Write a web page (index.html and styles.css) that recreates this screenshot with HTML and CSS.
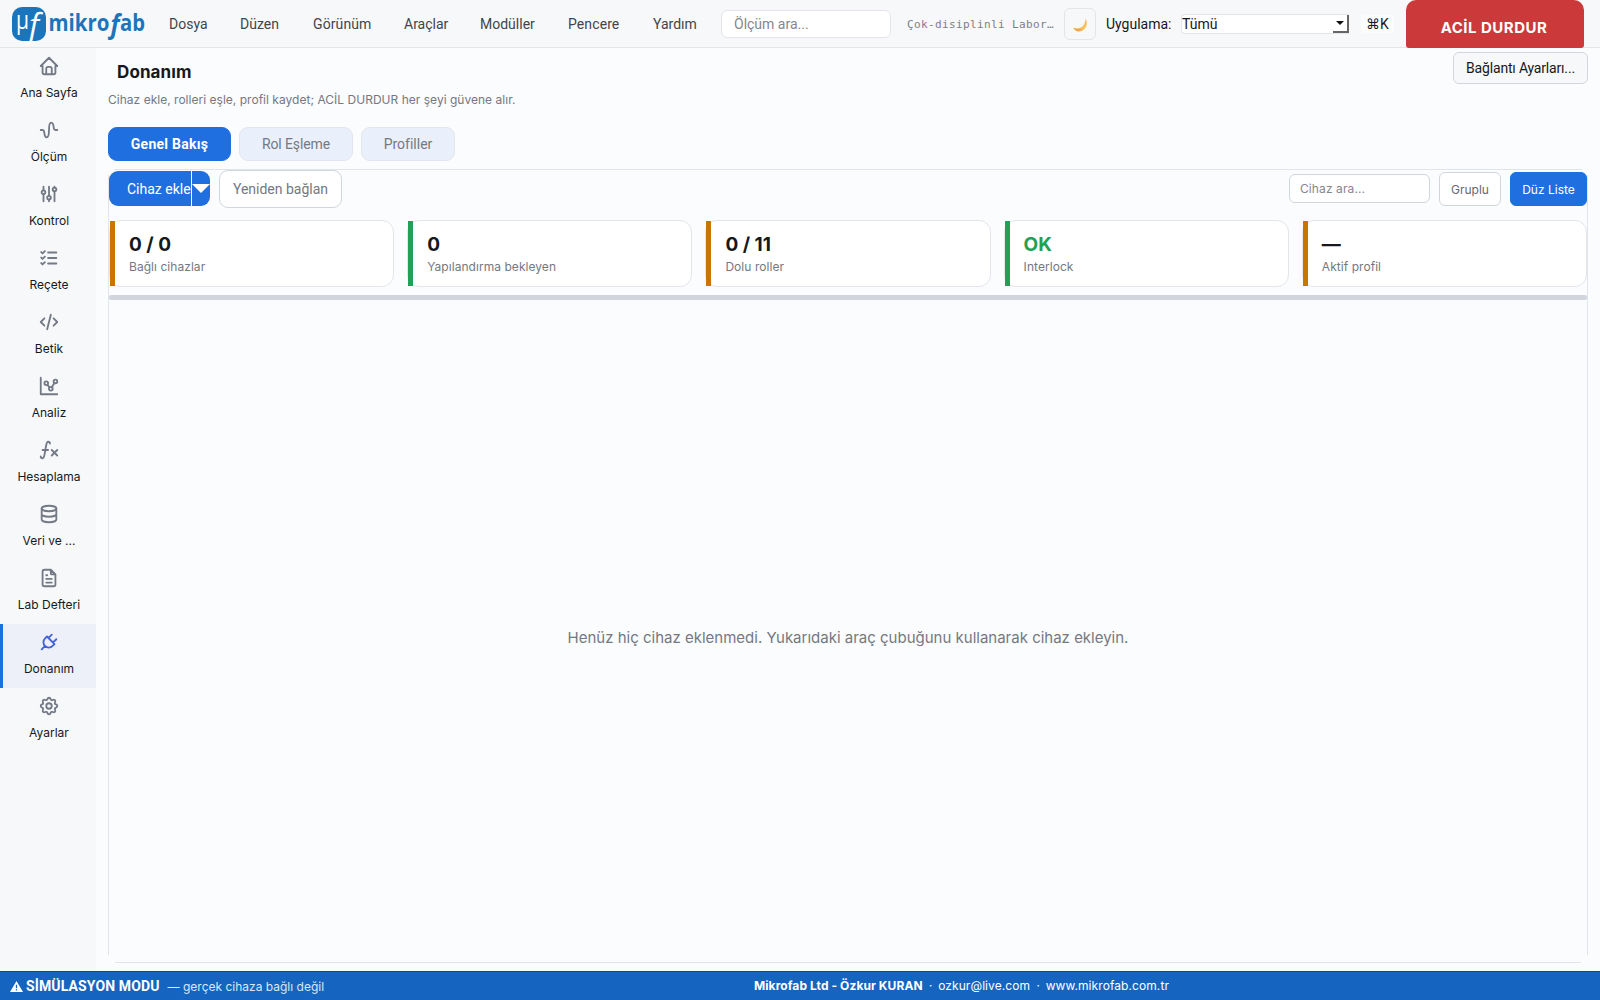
FILE: index.html
```
<!DOCTYPE html>
<html lang="tr">
<head>
    <meta charset="UTF-8">
    <meta name="viewport" content="width=device-width, initial-scale=1.0">
    <title>Mikrofab - Donanım</title>
    <link rel="stylesheet" href="styles.css">
</head>
<body>
    <!-- üst bar -->
    <header class="topbar">
        <div class="logo">
            <svg width="138" height="47" viewBox="0 0 138 47">
                <rect x="0" y="7" width="34" height="34" rx="10" fill="#1b75bc"/>
                <text class="logo-mu" x="4" y="28.500" textLength="13" lengthAdjust="spacingAndGlyphs">µ</text>
                <text class="logo-f" x="17" y="36.500" textLength="10" lengthAdjust="spacingAndGlyphs">f</text>
                <text class="logo-word" x="36.500" y="31" textLength="61" lengthAdjust="spacingAndGlyphs">mikro</text>
                <text class="logo-word italic" x="98.500" y="34" textLength="9" lengthAdjust="spacingAndGlyphs">f</text>
                <text class="logo-word" x="108" y="31" textLength="25" lengthAdjust="spacingAndGlyphs">ab</text>
            </svg>
        </div>
        <nav class="menu">
            <span class="m1">Dosya</span>
            <span class="m2">Düzen</span>
            <span class="m3">Görünüm</span>
            <span class="m4">Araçlar</span>
            <span class="m5">Modüller</span>
            <span class="m6">Pencere</span>
            <span class="m7">Yardım</span>
        </nav>
        <div class="search">Ölçüm ara...</div>
        <div class="subtitle">Çok-disiplinli Labor…</div>
        <div class="theme">
            <svg width="14" height="14" viewBox="0 0 14 14">
                <defs>
                    <linearGradient id="moon" x1="0" y1="1" x2="1" y2="0">
                        <stop offset="0" stop-color="#e58a4e"/>
                        <stop offset=".5" stop-color="#fcc35c"/>
                        <stop offset="1" stop-color="#f2b45c"/>
                    </linearGradient>
                </defs>
                <path d="M12.6 .3C14.6 4.600 14 9 11 11.600C7.500 14.600 2 14 .3 9.800C4 11.300 8 10.500 10.300 7.600C12 5.500 12.500 2.800 12.600 .3z" fill="url(#moon)"/>
            </svg>
        </div>
        <label class="app-label">Uygulama:</label>
        <div class="combo">
            <span>Tümü</span>
            <div class="combo-arrow"><svg width="8" height="4"><path d="M0 0h8l-4 4z" fill="#111"/></svg></div>
        </div>
        <div class="cmdk">⌘K</div>
        <div class="stop">ACİL DURDUR</div>
    </header>

    <div class="middle">
        <!-- sol menü -->
        <aside class="sidebar">
            <div class="item">
                <svg class="icon" viewBox="0 0 24 24"><path d="M5 12H3l9-9 9 9h-2M5 12v7a2 2 0 0 0 2 2h10a2 2 0 0 0 2-2v-7M9 21v-6a2 2 0 0 1 2-2h2a2 2 0 0 1 2 2v6"/></svg>
                <span>Ana Sayfa</span>
            </div>
            <div class="item">
                <svg class="icon" viewBox="0 0 24 24"><path d="M21 12h-2c-.894 0-1.662-.857-1.761-2-.296-3.450-.749-6-2.749-6s-2.500 3.582-2.500 8-.5 8-2.500 8-2.452-2.547-2.749-6c-.1-1.147-.867-2-1.763-2H3"/></svg>
                <span>Ölçüm</span>
            </div>
            <div class="item">
                <svg class="icon" viewBox="0 0 24 24"><circle cx="6" cy="10" r="2"/><circle cx="12" cy="16" r="2"/><circle cx="18" cy="7" r="2"/><path d="M6 4v4M6 12v8M12 4v10M12 18v2M18 4v1M18 9v11"/></svg>
                <span>Kontrol</span>
            </div>
            <div class="item">
                <svg class="icon" viewBox="0 0 24 24"><path d="M3.500 5.500L5 7l2.500-2.500M3.500 11.500L5 13l2.500-2.500M3.500 17.500L5 19l2.500-2.500M11 6h9M11 12h9M11 18h9"/></svg>
                <span>Reçete</span>
            </div>
            <div class="item">
                <svg class="icon" viewBox="0 0 24 24"><path d="M7 8l-4 4 4 4M17 8l4 4-4 4M14 4l-4 16"/></svg>
                <span>Betik</span>
            </div>
            <div class="item">
                <svg class="icon" viewBox="0 0 24 24"><path d="M3 3v18h18M10.160 10.620l2.340 2.880M15.088 13.328l2.837-4.586"/><circle cx="9" cy="9" r="2"/><circle cx="19" cy="7" r="2"/><circle cx="14" cy="15" r="2"/></svg>
                <span>Analiz</span>
            </div>
            <div class="item">
                <svg class="icon" viewBox="0 0 24 24"><path d="M3 19a2 2 0 0 0 2 2c2 0 2-4 3-9s1-9 3-9a2 2 0 0 1 2 2M5 12h6M15 12l6 6M15 18l6-6"/></svg>
                <span>Hesaplama</span>
            </div>
            <div class="item">
                <svg class="icon" viewBox="0 0 24 24"><ellipse cx="12" cy="6" rx="8" ry="3"/><path d="M4 6v6a8 3 0 0 0 16 0V6M4 12v6a8 3 0 0 0 16 0v-6"/></svg>
                <span>Veri ve ...</span>
            </div>
            <div class="item">
                <svg class="icon" viewBox="0 0 24 24"><path d="M14 3v4a1 1 0 0 0 1 1h4M17 21H7a2 2 0 0 1-2-2V5a2 2 0 0 1 2-2h7l5 5v11a2 2 0 0 1-2 2M9 9h1M9 13h6M9 17h6"/></svg>
                <span>Lab Defteri</span>
            </div>
            <div class="item active">
                <svg class="icon" viewBox="0 0 24 24"><path d="M9.785 6L18 14.215l-2.054 2.054a5.810 5.810 0 1 1-8.215-8.215L9.785 6zM4 20l3.500-3.500M15 4l-3.500 3.500M20 9l-3.500 3.500"/></svg>
                <span>Donanım</span>
            </div>
            <div class="item">
                <svg class="icon" viewBox="0 0 24 24"><path d="M10.325 4.317c.426-1.756 2.924-1.756 3.350 0a1.724 1.724 0 0 0 2.573 1.066c1.543-.94 3.310.826 2.370 2.370a1.724 1.724 0 0 0 1.065 2.572c1.756.426 1.756 2.924 0 3.350a1.724 1.724 0 0 0-1.066 2.573c.94 1.543-.826 3.310-2.370 2.370a1.724 1.724 0 0 0-2.572 1.065c-.426 1.756-2.924 1.756-3.350 0a1.724 1.724 0 0 0-2.573-1.066c-1.543.94-3.310-.826-2.370-2.370a1.724 1.724 0 0 0-1.065-2.572c-1.756-.426-1.756-2.924 0-3.350a1.724 1.724 0 0 0 1.066-2.573c-.94-1.543.826-3.310 2.370-2.370 1 .608 2.296.07 2.572-1.065z"/><circle cx="12" cy="12" r="3"/></svg>
                <span>Ayarlar</span>
            </div>
        </aside>

        <main class="content">
            <div class="page-head">
                <div>
                    <h1>Donanım</h1>
                    <p>Cihaz ekle, rolleri eşle, profil kaydet; ACİL DURDUR her şeyi güvene alır.</p>
                </div>
                <div class="btn-settings">Bağlantı Ayarları...</div>
            </div>
            <div class="tabs">
                <div class="tab on">Genel Bakış</div>
                <div class="tab t2">Rol Eşleme</div>
                <div class="tab t3">Profiller</div>
            </div>
            <section class="panel">
                <div class="toolbar">
                    <div class="split">
                        <span class="split-text">Cihaz ekle</span>
                        <span class="split-arrow"><svg width="18" height="9"><path d="M0 0h18l-9 9z" fill="#fff"/></svg></span>
                    </div>
                    <div class="reconnect">Yeniden bağlan</div>
                    <div class="filter">Cihaz ara...</div>
                    <div class="small-btn grouped">Gruplu</div>
                    <div class="small-btn flat">Düz Liste</div>
                </div>
                <div class="cards">
                    <div class="card orange"><b>0 / 0</b><span>Bağlı cihazlar</span></div>
                    <div class="card green"><b>0</b><span>Yapılandırma bekleyen</span></div>
                    <div class="card orange"><b>0 / 11</b><span>Dolu roller</span></div>
                    <div class="card green ok"><b>OK</b><span>Interlock</span></div>
                    <div class="card orange"><b>—</b><span>Aktif profil</span></div>
                </div>
                <div class="splitter"></div>
                <div class="empty">Henüz hiç cihaz eklenmedi. Yukarıdaki araç çubuğunu kullanarak cihaz ekleyin.</div>
            </section>
        </main>
    </div>

    <!-- alt bar -->
    <footer class="statusbar">
        <div class="sim">
            <svg width="13" height="11" viewBox="0 0 13 11"><path d="M6.500 0L13 11H0z" fill="#fff"/><path d="M6.500 3.800v3.400M6.500 8.300v1.300" stroke="#1565c0" stroke-width="1.300"/></svg>
            <b>SİMÜLASYON MODU</b>
            <span>— gerçek cihaza bağlı değil</span>
        </div>
        <div class="company"><b>Mikrofab Ltd - Özkur KURAN</b><i>·</i><span>ozkur@live.com</span><i>·</i><span>www.mikrofab.com.tr</span></div>
    </footer>
</body>
</html>
```
FILE: styles.css
```
*{
    box-sizing: border-box;
}
body{
    margin: 0;
    width: 1600px;
    height: 1000px;
    overflow: hidden;
    display: flex;
    flex-direction: column;
    background: #fbfcfe;
    color: #16181d;
    font-family: Inter, "Liberation Sans", sans-serif;
    font-size: 13px;
    white-space: nowrap;
}
/* üst bar */
.topbar{
    height: 48px;
    flex: none;
    display: flex;
    align-items: center;
    background: #f7f8fa;
    border-bottom: 1px solid #e3e5e9;
    padding-left: 12px;
}
.logo{
    width: 157px;
    height: 47px;
}
.logo-mu{
    font: 25px "Open Sans", sans-serif;
    fill: #fff;
}
.logo-f{
    font: italic 32px "Open Sans", sans-serif;
    fill: #fff;
}
.logo-word{
    font: bold 23px "Open Sans", sans-serif;
    fill: #1b75bc;
}
.logo-word.italic{
    font-size: 26px;
    font-style: italic;
}
.menu{
    display: flex;
    width: 552px;
    font-family: Roboto, sans-serif;
    font-size: 14px;
    color: #41454d;
}
.m1{
    width: 71px;
}
.m2{
    width: 73px;
}
.m3{
    width: 91px;
    letter-spacing: .1px;
}
.m4{
    width: 76px;
}
.m5{
    width: 88px;
}
.m6{
    width: 85px;
    letter-spacing: .1px;
}
.search{
    width: 170px;
    height: 28px;
    line-height: 26px;
    padding-left: 12px;
    background: #fff;
    border: 1px solid #e3e5e9;
    border-radius: 6px;
    color: #84878d;
    font-family: Roboto, sans-serif;
    font-size: 14px;
}
.subtitle{
    width: 157px;
    margin-left: 16px;
    padding-top: 1px;
    font-family: "DejaVu Sans Mono", monospace;
    font-size: 11px;
    letter-spacing: .38px;
    color: #7b7f87;
}
.theme{
    width: 32px;
    height: 32px;
    display: flex;
    align-items: center;
    justify-content: center;
    border: 1px solid #e3e5e9;
    border-radius: 6px;
    padding-top: 3px;
}
.app-label{
    width: 75px;
    margin-left: 10px;
    font-family: Roboto, sans-serif;
    font-size: 14px;
}
.combo{
    width: 168px;
    height: 20px;
    display: flex;
    justify-content: space-between;
    background: #fff;
    border: 1px solid #e3e5e9;
    border-right: 0;
    border-radius: 4px 0 0 4px;
    line-height: 18px;
    font-family: Roboto, sans-serif;
    font-size: 14px;
}
.combo-arrow{
    width: 16px;
    display: flex;
    align-items: center;
    justify-content: center;
    border-right: 2px solid #666;
    border-bottom: 2px solid #666;
}
.cmdk{
    width: 33px;
    height: 18px;
    line-height: 18px;
    margin-left: 12px;
    text-align: center;
    background: #fbfcfe;
    border-radius: 3px;
    font-family: Roboto, "DejaVu Sans", sans-serif;
    font-size: 14px;
}
.stop{
    width: 178px;
    height: 48px;
    margin: 0 0 -1px 12px;
    padding: 6px 2px 0 0;
    line-height: 44px;
    text-align: center;
    background: #cb393b;
    border-radius: 10px 10px 3px 3px;
    color: #fff;
    font-size: 15px;
    font-weight: bold;
    letter-spacing: .5px;
}
/* orta kısım */
.middle{
    flex: 1;
    display: flex;
    min-height: 0;
}
.sidebar{
    width: 96px;
    background: #f7f8fa;
}
.item{
    height: 64px;
    display: flex;
    flex-direction: column;
    align-items: center;
    padding: 7px 0 0 2px;
    font-size: 12px;
}
.item span{
    margin-top: 8px;
    line-height: 16px;
}
.icon{
    width: 22px;
    height: 22px;
    fill: none;
    stroke: #737985;
    stroke-width: 2;
    stroke-linecap: round;
    stroke-linejoin: round;
}
.active{
    background: #edf0f9;
    border-left: 3px solid #1f6fe0;
    padding-left: 0;
    padding-right: 1px;
}
.active .icon{
    stroke: #4263d8;
}
.content{
    flex: 1;
    display: flex;
    flex-direction: column;
    padding: 4px 12px 8px;
}
.page-head{
    height: 75px;
    flex: none;
    display: flex;
    justify-content: space-between;
}
h1{
    margin: 10px 0 0 9px;
    font-size: 17px;
    line-height: 20px;
    letter-spacing: .1px;
}
.page-head p{
    margin: 10px 0 0;
    font-size: 12px;
    line-height: 16px;
    letter-spacing: .02px;
    color: #747881;
}
.btn-settings{
    width: 135px;
    height: 32px;
    line-height: 30px;
    text-align: center;
    background: #f7f8fa;
    border: 1px solid #d1d5dc;
    border-radius: 6px;
    font-family: Roboto, sans-serif;
    font-size: 14px;
    letter-spacing: -.18px;
}
.tabs{
    display: flex;
    gap: 8px;
    height: 42px;
    flex: none;
}
.tab{
    width: 123px;
    height: 34px;
    line-height: 33px;
    text-align: center;
    background: #eaf0fb;
    border: 1px solid #e1e5ed;
    border-radius: 9px;
    color: #747881;
    font-family: Roboto, sans-serif;
    font-size: 14px;
}
.t2{
    width: 114px;
    letter-spacing: -.1px;
}
.t3{
    width: 94px;
}
.tab.on{
    background: #1f6fe0;
    border-color: #1f6fe0;
    color: #fff;
    font-weight: bold;
    letter-spacing: .25px;
}
/* kenar çizgileri köşelerde birleşmiyor */
.panel{
    flex: 1;
    display: flex;
    flex-direction: column;
    padding: 1px;
    background:
        linear-gradient(#e1e4ea, #e1e4ea) center top / calc(100% - 12px) 1px no-repeat,
        linear-gradient(#e1e4ea, #e1e4ea) center bottom / calc(100% - 14px) 1px no-repeat,
        linear-gradient(#e1e4ea, #e1e4ea) left 6px / 1px calc(100% - 14px) no-repeat,
        linear-gradient(#e1e4ea, #e1e4ea) right 6px / 1px calc(100% - 14px) no-repeat;
    background-position: center top, center bottom, left 6px, right 0 top 6px;
}
.toolbar{
    height: 50px;
    flex: none;
    display: flex;
    align-items: flex-start;
}
.split{
    width: 101px;
    height: 35px;
    margin-top: 1px;
    display: flex;
    background: #1f6fe0;
    border-radius: 9px;
    color: #fff;
    font-family: Roboto, sans-serif;
    font-size: 14px;
    line-height: 37px;
    overflow: hidden;
}
.split-text{
    width: 82px;
    padding-left: 18px;
}
.split-arrow{
    width: 19px;
    display: flex;
    align-items: center;
    border-left: 1px solid #fff;
}
.reconnect{
    width: 123px;
    height: 38px;
    margin-left: 9px;
    line-height: 36px;
    text-align: center;
    background: #fff;
    border: 1px solid #d1d5dc;
    border-radius: 9px;
    color: #747881;
    font-family: Roboto, sans-serif;
    font-size: 14px;
}
.filter{
    width: 141px;
    height: 29px;
    margin: 4px 9px 0 auto;
    padding-left: 10px;
    line-height: 27px;
    background: #fff;
    border: 1px solid #d1d5dc;
    border-radius: 6px;
    color: #84878d;
    font-size: 12px;
    letter-spacing: .1px;
}
.small-btn{
    height: 34px;
    margin-top: 2px;
    line-height: 34px;
    text-align: center;
    border: 1px solid #d1d5dc;
    border-radius: 6px;
    font-size: 12px;
}
.grouped{
    width: 62px;
    background: #fff;
    color: #65686e;
}
.flat{
    width: 77px;
    margin-left: 9px;
    background: #1f6fe0;
    border-color: #1f6fe0;
    color: #fff;
}
.cards{
    display: flex;
    flex: none;
    gap: 13px;
}
.card{
    flex: 1;
    height: 67px;
    position: relative;
    background: #fff;
    border: 1px solid #e3e5e9;
    border-radius: 12px;
    padding: 12px 0 0 19px;
}
/* soldaki renkli şerit */
.card::before{
    content: "";
    position: absolute;
    left: 0;
    top: 0;
    width: 5px;
    height: 65px;
    background: #c77700;
}
.green::before{
    background: #22a055;
}
.card b{
    display: block;
    font-size: 19px;
    line-height: 24px;
}
.card span{
    display: block;
    font-size: 12px;
    line-height: 20px;
    letter-spacing: .05px;
    color: #747881;
}
.ok b{
    color: #22a055;
}
.splitter{
    height: 5px;
    flex: none;
    margin-top: 8px;
    border-radius: 2px;
    background: #d1d6dd;
}
.empty{
    flex: 1;
    display: flex;
    align-items: center;
    justify-content: center;
    padding-top: 12px;
    font-size: 15px;
    color: #747881;
}
/* alt bar */
.statusbar{
    height: 29px;
    flex: none;
    display: flex;
    align-items: center;
    background: #1565c0;
    border-top: 1px solid #0d47a1;
    color: #fff;
}
.sim{
    width: 754px;
    display: flex;
    align-items: center;
    padding-left: 10px;
}
.sim b{
    margin-left: 3px;
    font-family: Roboto, sans-serif;
    font-size: 14px;
    letter-spacing: .13px;
}
.sim span{
    margin-left: 8px;
    font-size: 12px;
    color: #dbe7f6;
}
.company{
    padding-bottom: 2px;
    font-size: 12px;
    letter-spacing: .08px;
}
.company i{
    margin: 0 6px;
}
```
